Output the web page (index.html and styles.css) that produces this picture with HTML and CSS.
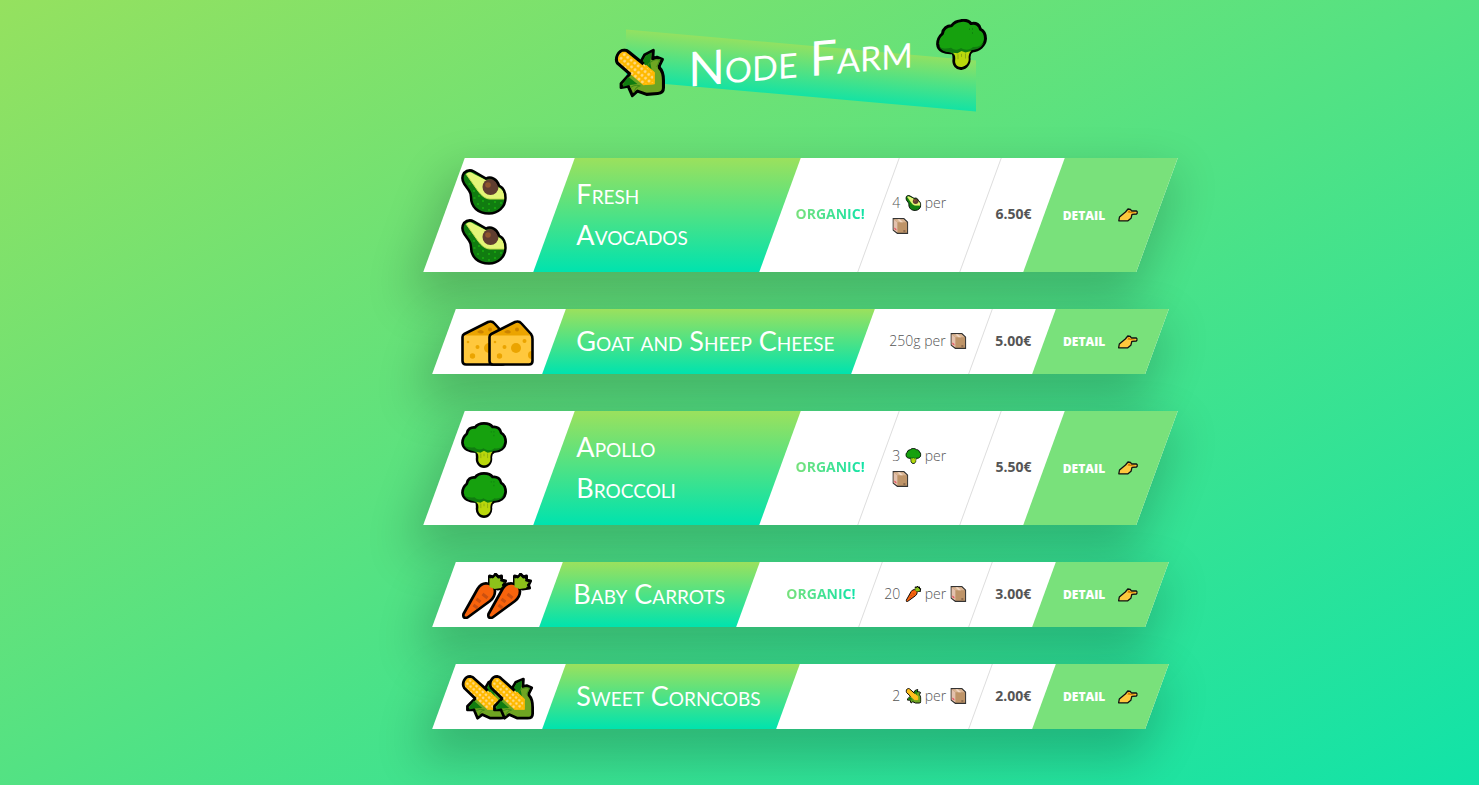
FILE: index.html
```html
<!DOCTYPE html>
<html lang="en">
<head>
<meta charset="utf-8">
<meta name="viewport" content="width=device-width, initial-scale=1">
<title>Node Farm</title>
<link rel="stylesheet" href="styles.css">
</head>
<body>
<svg class="sprite" width="0" height="0" aria-hidden="true">
  <defs>
    <pattern id="kernels" width="4.600" height="4.600" patternUnits="userSpaceOnUse" patternTransform="rotate(42)">
      <rect width="4.600" height="4.600" fill="#ffb900"/><circle cx="2.300" cy="2.300" r="1.400" fill="#ffdb84"/>
    </pattern>
    <symbol id="corn" viewBox="0 0 50 50">
      <path d="M26 15 30 8l8.500-3.500-.5 8 4-1 5.500 2.500-3 6v2c3 3 4 7 4 13v7q0 5-5.500 5H32l-9-4-5 4-4-9.500-7 .5v-4l6-6z" fill="#6fa522" stroke="#000" stroke-width="3" stroke-linejoin="round"/>
      <path d="M27 16l4-7 6-3-1.500 10 1.500 8zM14 28l9 8-9 .5-5 1v-3z" fill="#107c10"/>
      <path d="M33 19q3-6 12-5l-3 7M16 39q5-3 9-1M20 44q0-5 6-6" fill="none" stroke="#3f8a18"/>
      <path d="M28.500 37.500 3.500 14C.5 9 4 1.500 10 1.600q3 .4 4.500 2.400l25.200 22.300v11.200z" fill="url(#kernels)"/>
      <path d="M31 18.500l8.200 7.800v10.700H28.500" fill="none" stroke="#ffb900" stroke-width="1.500"/>
      <path d="M16 26 3.500 14C.5 9 4 1.500 10 1.600q3 .4 4.500 2.400L29 17" fill="none" stroke="#000" stroke-width="3"/>
    </symbol>
    <symbol id="broccoli" viewBox="0 0 51 51">
      <path d="M17 33C9 33 2 30 1.600 23c0-6 2.400-8 4.900-10 .5-5 4.500-7.500 9-7C18 2.500 21 1.500 25.500 1.500S33 2.500 35 5.500c5-1 9 2.500 9.500 6.500 3.500 2 5 6 5 10-.5 7-6.500 11-13 11-2.500 1-3.500 3-3.500 6 1 6-3 10.500-7.500 10.500S17 45 18 39c0-3-.5-5-1-6z" fill="#16a10e" stroke="#000" stroke-width="3" stroke-linejoin="round"/>
      <path d="M3 25c2 3 7 4 12 3 3 3 7 3 10 1 4 3 9 3 12 0 5 1 9-1 11-4-2 5-6 7-12 7l-4 3-13 1c-4-6-12-2-16-11z" fill="#107c10"/>
      <path d="M17 33l4.500 1 4-2 4 2 5.500-1c-2 2-2.700 5-2.300 8 0 4-3 7-7 7s-7-3-6.500-7c.5-3 0-6-2.200-8z" fill="#b9d70c"/>
      <path d="M22 35v5m3.500-5v3m4-3v5" stroke="#8cad12" fill="none"/>
      <path d="M33 11h1m2 0h1m-1 4h1" stroke="#107c10" stroke-width="1.500"/>
    </symbol>
    <symbol id="avocado" viewBox="0 0 46 46">
      <path d="M3 4C6 1 10 1 13 2.500l12 7c5-2.500 11 .5 13 7 4 2 6.500 7 6.500 12.500C44.500 38 37 44.500 28 44.500 17 44.500 10 38 10 28c0-3-.6-4.500-2-6.500L3 14.500C1 11 1 7 3 4z" fill="#107c10"/>
      <path d="M5 5c3-2.500 5-2 8 0l12 6 12 7c5 2 7 7 7 12H29c-5 0-9-4-12-8z" fill="#e4f577"/>
      <path d="M5 5l12 17c3 4 7 8 12 8h15" fill="none" stroke="#c5dc4e"/>
      <path d="M7.500 15h2M12 22h2M12.500 29h2M17 27h2M16 35h2M21 32h2M21 39h2M27 35h2M33 39h2M33 33h2M39 34h2M27 41h2" stroke="#16a10e" stroke-width="2"/>
      <circle cx="29.500" cy="18" r="8" fill="#603d30"/><circle cx="27" cy="16" r="2.800" fill="#8e562e"/>
      <path d="M3 4C6 1 10 1 13 2.500l12 7c5-2.500 11 .5 13 7 4 2 6.500 7 6.500 12.500C44.500 38 37 44.500 28 44.500 17 44.500 10 38 10 28c0-3-.6-4.500-2-6.500L3 14.500C1 11 1 7 3 4z" fill="none" stroke="#000" stroke-width="2.500"/>
    </symbol>
    <symbol id="cheese" viewBox="0 0 46 46">
      <path d="M1.500 17q0-2 1.800-3L27 2q4-1.500 6.500 1.500L43 14q1.500 2 1.500 5v22q0 3.500-3.500 3.500H5q-3.500 0-3.500-3.500z" fill="#ffc83d"/>
      <path d="M3 15.500 28 2.500q3-1 5 1.500l9.500 11.500z" fill="#eba400"/>
      <g fill="#eba400"><circle cx="28" cy="28" r="5"/><circle cx="11.500" cy="36" r="2.700"/><circle cx="16.500" cy="27" r="2"/><circle cx="36.500" cy="21" r="2"/><circle cx="7" cy="22" r="1.300"/><path d="M44 31a4 4 0 0 0 0 8z"/></g>
      <path d="M16 12q4-4 7 0-2 3-7 0z" fill="#ca8300"/><circle cx="29" cy="9.500" r="2" fill="#ca8300"/>
      <path d="M1.500 17q0-2 1.800-3L27 2q4-1.500 6.500 1.500L43 14q1.500 2 1.500 5v22q0 3.500-3.500 3.500H5q-3.500 0-3.500-3.500z" fill="none" stroke="#000" stroke-width="2.600"/>
    </symbol>
    <symbol id="carrot" viewBox="0 0 45 46">
      <path d="M28 12V3l4 1 2-3 3 3 3-1v4l4 1-2 4 1 3-7 1z" fill="#7fb71c" stroke="#000" stroke-width="3" stroke-linejoin="round"/>
      <path d="M2 41 16 16q4-6.500 10-5.500 7 1 7.500 7.500 0 6-5 10L6 44.500Q1 46 2 41z" fill="#f7630c" stroke="#000" stroke-width="2.700" stroke-linejoin="round"/>
      <path d="M28 14V5l3 1 3-3 2 3h3l-1 3 4 1-3 2 1 3-7 1z" fill="#8cc21a"/>
      <path d="M21 21l5 4M15 26l4 3M12 32l4 3" stroke="#ca5010" stroke-width="3"/>
    </symbol>
    <symbol id="box" viewBox="0 0 16 16">
      <path d="M.7.7h10.800l3.800 3.500v11.100H5L.7 12z" fill="#be9468" stroke="#333" stroke-width="1.200"/>
      <path d="M1.300 1.300 5 4.300v10.200l-3.700-2.800z" fill="#e3c1ad"/>
      <path d="M1.500 1.300h9.700l3.200 3H5z" fill="#d9b593"/><path d="M5 1.300h2.500l3.200 3H8z" fill="#f0d6c2"/>
      <path d="M2 9.500l2 1.500v1.500L2 11z" fill="#e8455c"/><path d="M11 13h2" stroke="#604636"/>
    </symbol>
    <symbol id="hand" viewBox="0 0 20 14">
      <path d="M.8 12.800 1.500 9 7.500 4 10 1l2.500.3L13.500 3h5l.7.7v1.600l-.7.700-4.500.3-1 4-3 2.500z" fill="#ffc83d" stroke="#111" stroke-width="1.300" stroke-linejoin="round"/>
      <path d="M9.500 4.500 11 2l1.500 1.800 5.500.4-5.500.800z" fill="#d67d00"/>
    </symbol>
  </defs>
</svg>

<div class="container">
  <h1 class="logo">
    <svg class="logo__icon"><use href="#corn"/></svg>
    <span>Node Farm</span>
    <svg class="logo__icon"><use href="#broccoli"/></svg>
  </h1>

  <main class="cards">
    <figure class="card card--tall">
      <div class="card__emoji"><svg class="emoji"><use href="#avocado"/></svg><svg class="emoji"><use href="#avocado"/></svg></div>
      <div class="card__title-box"><h2 class="card__title">Fresh<br>Avocados</h2></div>
      <div class="card__details">
        <div class="card__detail-box"><p class="card__detail card__detail--organic">Organic!</p></div>
        <div class="card__detail-box card__detail-box--quantity"><p class="card__detail">4 <svg class="mini"><use href="#avocado"/></svg> per<br><svg class="mini mini--start"><use href="#box"/></svg></p></div>
        <div class="card__detail-box"><p class="card__detail card__detail--price">6.50€</p></div>
      </div>
      <a class="card__link" href="#avocados"><span>Detail</span><svg class="hand"><use href="#hand"/></svg></a>
    </figure>

    <figure class="card card--cheese">
      <div class="card__emoji"><svg class="emoji"><use href="#cheese"/></svg><svg class="emoji"><use href="#cheese"/></svg></div>
      <div class="card__title-box"><h2 class="card__title">Goat and Sheep Cheese</h2></div>
      <div class="card__details">
        <div class="card__detail-box"><p class="card__detail">250g per <svg class="mini"><use href="#box"/></svg></p></div>
        <div class="card__detail-box"><p class="card__detail card__detail--price">5.00€</p></div>
      </div>
      <a class="card__link" href="#cheese-detail"><span>Detail</span><svg class="hand"><use href="#hand"/></svg></a>
    </figure>

    <figure class="card card--tall">
      <div class="card__emoji"><svg class="emoji"><use href="#broccoli"/></svg><svg class="emoji"><use href="#broccoli"/></svg></div>
      <div class="card__title-box"><h2 class="card__title">Apollo<br>Broccoli</h2></div>
      <div class="card__details">
        <div class="card__detail-box"><p class="card__detail card__detail--organic">Organic!</p></div>
        <div class="card__detail-box card__detail-box--quantity"><p class="card__detail">3 <svg class="mini"><use href="#broccoli"/></svg> per<br><svg class="mini mini--start"><use href="#box"/></svg></p></div>
        <div class="card__detail-box"><p class="card__detail card__detail--price">5.50€</p></div>
      </div>
      <a class="card__link" href="#broccoli-detail"><span>Detail</span><svg class="hand"><use href="#hand"/></svg></a>
    </figure>

    <figure class="card card--carrots">
      <div class="card__emoji"><svg class="emoji"><use href="#carrot"/></svg><svg class="emoji"><use href="#carrot"/></svg></div>
      <div class="card__title-box"><h2 class="card__title">Baby Carrots</h2></div>
      <div class="card__details">
        <div class="card__detail-box"><p class="card__detail card__detail--organic">Organic!</p></div>
        <div class="card__detail-box"><p class="card__detail">20 <svg class="mini"><use href="#carrot"/></svg> per <svg class="mini"><use href="#box"/></svg></p></div>
        <div class="card__detail-box"><p class="card__detail card__detail--price">3.00€</p></div>
      </div>
      <a class="card__link" href="#carrots"><span>Detail</span><svg class="hand"><use href="#hand"/></svg></a>
    </figure>

    <figure class="card card--corn">
      <div class="card__emoji"><svg class="emoji"><use href="#corn"/></svg><svg class="emoji"><use href="#corn"/></svg></div>
      <div class="card__title-box"><h2 class="card__title">Sweet Corncobs</h2></div>
      <div class="card__details">
        <div class="card__detail-box"><p class="card__detail">2 <svg class="mini"><use href="#corn"/></svg> per <svg class="mini"><use href="#box"/></svg></p></div>
        <div class="card__detail-box"><p class="card__detail card__detail--price">2.00€</p></div>
      </div>
      <a class="card__link" href="#corncobs"><span>Detail</span><svg class="hand"><use href="#hand"/></svg></a>
    </figure>
  </main>
</div>
</body>
</html>
```
FILE: styles.css
```css
*, *::before, *::after { box-sizing: border-box; margin: 0; padding: 0; }

body {
  min-height: 100vh;
  padding: 20px 0 56px 121px;
  background: linear-gradient(to bottom right, #95e15f, #11e3a8) no-repeat;
  color: #555;
  font-family: "Open Sans", "Noto Sans", sans-serif;
  overflow-x: hidden;
}

.sprite { position: absolute; }
svg { overflow: visible; }

.container { max-width: 713px; margin: 0 auto; }

.logo {
  position: relative;
  z-index: 0;
  display: flex;
  align-items: center;
  justify-content: center;
  gap: 23px;
  height: 77px;
  color: #fff;
  font-family: Lato, sans-serif;
  font-size: 48px;
  font-weight: 400;
  font-variant: small-caps;
  white-space: nowrap;
  transform: skewY(-5deg);
}
.logo::before {
  content: "";
  position: absolute;
  z-index: -1;
  top: 25px;
  left: 50%;
  width: 350px;
  height: 51px;
  background: linear-gradient(to bottom, #9be15d, #00e3ae);
  opacity: .8;
  transform: translateX(-50%) skewY(10deg);
}
.logo__icon { width: 51px; height: 51px; }

.cards { display: grid; gap: 37px; margin-top: 61px; }

.card {
  display: flex;
  min-height: 65px;
  background: #fff;
  box-shadow: 0 22px 45px 7px rgba(0, 0, 0, .2);
  transform: skewX(-20deg);
}
.card__emoji {
  display: flex;
  flex: 0 0 110px;
  align-items: center;
  padding: 3px 17px 0;
  transform: skewX(20deg);
}
.emoji { flex: none; width: 46px; height: 46px; }
.emoji + .emoji { margin-left: -19px; }

.card__title-box {
  display: flex;
  flex: none;
  align-items: center;
  margin-right: auto;
  padding: 0 22px 3px;
  background: linear-gradient(to bottom, #9be15d, #00e3ae);
}
.card__title {
  color: #fff;
  font-family: Lato, sans-serif;
  font-size: 27px;
  font-weight: 400;
  font-variant: small-caps;
  line-height: 41px;
  white-space: nowrap;
  transform: skewX(20deg);
}

.card__details { display: flex; }
.card__detail-box {
  display: flex;
  align-items: center;
  padding: 0 14px 3px 13px;
  border-right: 1px solid #ddd;
}
.card__detail-box:last-child { padding: 0 13px 3px 14px; border-right: 0; }
.card__detail {
  font-size: 14px;
  font-weight: 300;
  line-height: 23px;
  white-space: nowrap;
  transform: skewX(20deg);
}
.card__detail--price { font-weight: 700; }
.card__detail--organic {
  background: linear-gradient(to right, #79e17b, #11e3a8);
  background-clip: text;
  -webkit-background-clip: text;
  color: transparent;
  font-weight: 700;
  text-transform: uppercase;
}
.mini { width: 16px; height: 16px; margin-left: 1px; vertical-align: -3px; }
.mini--start { margin-left: 0; }

.card__link {
  display: flex;
  flex: 0 0 113px;
  align-items: center;
  justify-content: center;
  gap: 12px;
  background: #79e17b;
  color: #fff;
  font-size: 12px;
  font-weight: 800;
  text-decoration: none;
  text-transform: uppercase;
}
.card__link > * { transform: skewX(20deg); }
.hand { width: 20px; height: 14px; }

.card--tall { min-height: 114px; }
.card--tall .card__emoji { flex-direction: column; align-items: flex-start; justify-content: center; gap: 4px; }
.card--tall .emoji + .emoji { margin-left: 0; }
.card--tall .card__title-box { width: 226px; }
.card--tall .card__detail-box--quantity { width: 102px; }
.card--cheese .card__title-box { width: 309px; }
.card--carrots .card__emoji { flex-basis: 107px; }
.card--carrots .emoji + .emoji { margin-left: -21px; }
.card--carrots .card__title-box { width: 197px; }
.card--corn .card__title-box { width: 234px; }
```
